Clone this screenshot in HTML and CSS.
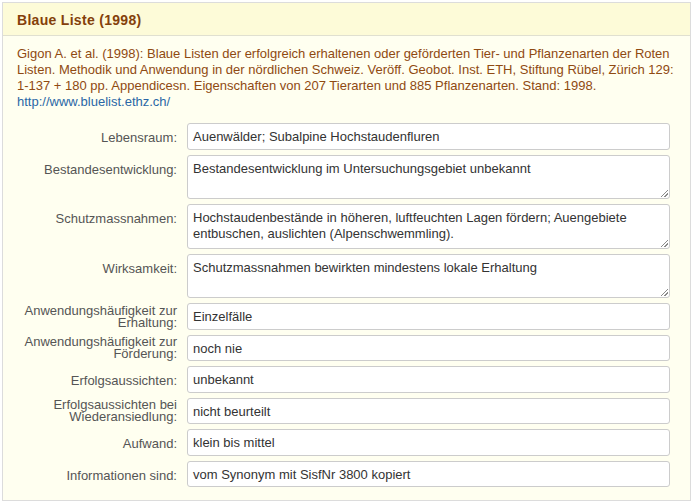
FILE: index.html
```html
<!DOCTYPE html>
<html lang="de">
<head>
<meta charset="utf-8">
<title>Blaue Liste (1998)</title>
<link rel="stylesheet" href="styles.css">
</head>
<body>
<div class="panel">
  <div class="panel-heading">
    <h3 class="panel-title">Blaue Liste (1998)</h3>
  </div>
  <div class="panel-body">
    <p class="citation">Gigon A. et al. (1998): Blaue Listen der erfolgreich erhaltenen oder geförderten Tier- und Pflanzenarten der Roten Listen. Methodik und Anwendung in der nördlichen Schweiz. Veröff. Geobot. Inst. ETH, Stiftung Rübel, Zürich 129: 1-137 + 180 pp. Appendicesn. Eigenschaften von 207 Tierarten und 885 Pflanzenarten. Stand: 1998.<br><a class="link" href="#">http://www.bluelist.ethz.ch/</a></p>
    <div class="form">
      <div class="row">
        <div class="label">Lebensraum:</div>
        <div class="field">Auenwälder; Subalpine Hochstaudenfluren</div>
      </div>
      <div class="row">
        <div class="label">Bestandesentwicklung:</div>
        <div class="field multi">Bestandesentwicklung im Untersuchungsgebiet unbekannt<span class="grip"></span></div>
      </div>
      <div class="row">
        <div class="label">Schutzmassnahmen:</div>
        <div class="field multi">Hochstaudenbestände in höheren, luftfeuchten Lagen fördern; Auengebiete entbuschen, auslichten (Alpenschwemmling).<span class="grip"></span></div>
      </div>
      <div class="row">
        <div class="label">Wirksamkeit:</div>
        <div class="field multi">Schutzmassnahmen bewirkten mindestens lokale Erhaltung<span class="grip"></span></div>
      </div>
      <div class="row">
        <div class="label two">Anwendungshäufigkeit zur Erhaltung:</div>
        <div class="field">Einzelfälle</div>
      </div>
      <div class="row">
        <div class="label two">Anwendungshäufigkeit zur Förderung:</div>
        <div class="field">noch nie</div>
      </div>
      <div class="row">
        <div class="label">Erfolgsaussichten:</div>
        <div class="field">unbekannt</div>
      </div>
      <div class="row">
        <div class="label two">Erfolgsaussichten bei Wiederansiedlung:</div>
        <div class="field">nicht beurteilt</div>
      </div>
      <div class="row">
        <div class="label">Aufwand:</div>
        <div class="field">klein bis mittel</div>
      </div>
      <div class="row">
        <div class="label">Informationen sind:</div>
        <div class="field">vom Synonym mit SisfNr 3800 kopiert</div>
      </div>
    </div>
  </div>
</div>
</body>
</html>
```

FILE: styles.css
```css
html, body {
  margin: 0;
  padding: 0;
  background: #ffffff;
}

body {
  font-family: "Liberation Sans", Arial, sans-serif;
  font-size: 13px;
}

.panel {
  margin: 2px 0 0 2px;
  width: 689px;
  height: 499px;
  box-sizing: border-box;
  border: 1px solid #dcdcdc;
  background: #fffff0;
  display: flex;
  flex-direction: column;
}

.panel-heading {
  background: #fdfbd8;
  border-bottom: 1px solid #e0e0d0;
  padding: 7px 14px 5px;
}

.panel-title {
  margin: 0;
  font-size: 14px;
  line-height: 20px;
  font-weight: bold;
  letter-spacing: 0.3px;
  color: #84400a;
}

.panel-body {
  padding: 10px 14px 0;
}

.citation {
  margin: 0;
  font-size: 13px;
  line-height: 16px;
  color: #8f4a12;
}

.link {
  color: #2a67a6;
  text-decoration: none;
}

.form {
  margin-top: 13px;
  display: flex;
  flex-direction: column;
  gap: 5px;
}

.row {
  display: grid;
  grid-template-columns: 160px 483px;
  column-gap: 10px;
  align-items: start;
}

.label {
  text-align: right;
  color: #555555;
  font-size: 13px;
  line-height: 16px;
  padding-top: 7px;
}

.label.two {
  line-height: 12px;
  padding-top: 1.5px;
}

.field {
  position: relative;
  box-sizing: border-box;
  height: 26.5px;
  padding: 5.25px 5px 3.25px;
  border: 1px solid #cccccc;
  border-radius: 3px;
  background: #ffffff;
  color: #333333;
  font-size: 13px;
  line-height: 16px;
  white-space: nowrap;
  overflow: hidden;
}

.field.multi {
  height: 44.5px;
  white-space: normal;
}

.grip {
  position: absolute;
  right: 1px;
  bottom: 1px;
  width: 7px;
  height: 7px;
  background:
    linear-gradient(135deg, transparent 0 46%, #8a8a8a 46% 56%, transparent 56% 70%, #8a8a8a 70% 80%, transparent 80%);
}
```
